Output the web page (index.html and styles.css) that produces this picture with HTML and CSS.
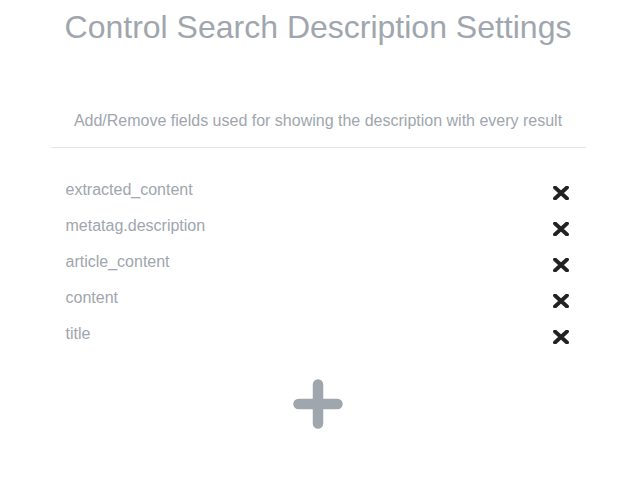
FILE: index.html
```html
<!DOCTYPE html>
<html>
<head>
<meta charset="utf-8">
<link rel="stylesheet" href="styles.css">
</head>
<body>
<div class="page">
  <h1 class="title">Control Search Description Settings</h1>
  <p class="subtitle">Add/Remove fields used for showing the description with every result</p>
  <hr class="divider">
  <ul class="fields">
    <li class="field"><span class="name">extracted_content</span><span class="remove"><svg viewBox="0 0 16 14" width="16" height="14"><path d="M2 1.5 L14 12.5 M14 1.5 L2 12.5" stroke="#222" stroke-width="3.8" stroke-linecap="round"/></svg></span></li>
    <li class="field"><span class="name">metatag.description</span><span class="remove"><svg viewBox="0 0 16 14" width="16" height="14"><path d="M2 1.5 L14 12.5 M14 1.5 L2 12.5" stroke="#222" stroke-width="3.8" stroke-linecap="round"/></svg></span></li>
    <li class="field"><span class="name">article_content</span><span class="remove"><svg viewBox="0 0 16 14" width="16" height="14"><path d="M2 1.5 L14 12.5 M14 1.5 L2 12.5" stroke="#222" stroke-width="3.8" stroke-linecap="round"/></svg></span></li>
    <li class="field"><span class="name">content</span><span class="remove"><svg viewBox="0 0 16 14" width="16" height="14"><path d="M2 1.5 L14 12.5 M14 1.5 L2 12.5" stroke="#222" stroke-width="3.8" stroke-linecap="round"/></svg></span></li>
    <li class="field"><span class="name">title</span><span class="remove"><svg viewBox="0 0 16 14" width="16" height="14"><path d="M2 1.5 L14 12.5 M14 1.5 L2 12.5" stroke="#222" stroke-width="3.8" stroke-linecap="round"/></svg></span></li>
  </ul>
  <div class="add">
    <svg viewBox="0 0 50 50" width="50" height="50"><path d="M25 5.5 V44.5 M5.5 25 H44.5" stroke="#a0a6ae" stroke-width="10.5" stroke-linecap="round"/></svg>
  </div>
</div>
</body>
</html>
```
FILE: styles.css
```css
html, body {
  margin: 0;
  padding: 0;
  background: #fff;
}
body {
  font-family: "Liberation Sans", Arial, sans-serif;
  color: #a0a6ae;
}
.page {
  width: 535px;
  margin: 0 auto;
}
.title {
  margin: 0;
  padding-top: 8px;
  font-size: 32px;
  font-weight: normal;
  text-align: center;
  line-height: 38px;
}
.subtitle {
  margin: 65px 0 0;
  font-size: 16px;
  line-height: 20px;
  text-align: center;
}
.divider {
  border: 0;
  border-top: 1px solid #e5e5e5;
  margin: 16px 0 0;
}
.fields {
  list-style: none;
  margin: 0;
  padding: 33px 17px 0 15px;
}
.field {
  display: flex;
  justify-content: space-between;
  align-items: flex-start;
  height: 36px;
  font-size: 16px;
  line-height: 18px;
}
.remove {
  display: flex;
  padding-top: 5px;
}
.add {
  display: flex;
  justify-content: center;
  margin-top: 18px;
}
```
